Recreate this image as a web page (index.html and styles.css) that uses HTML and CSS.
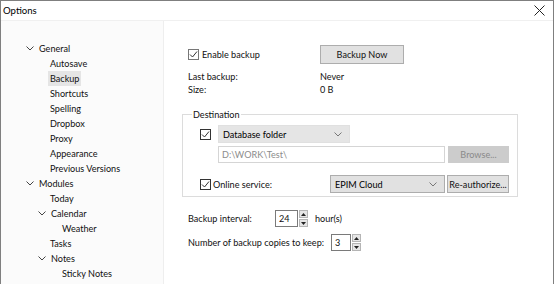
FILE: index.html
```html
<!DOCTYPE html>
<html>
<head>
<meta charset="utf-8">
<link rel="stylesheet" href="styles.css">
</head>
<body>
<div class="window">
  <div class="titlebar">
    <span class="title">Options</span>
    <svg class="close" width="11" height="11" viewBox="0 0 11 11"><path d="M0.5 0.5L10.5 10.5M10.5 0.5L0.5 10.5" stroke="#222" stroke-width="1" fill="none"/></svg>
  </div>
  <div class="main">
    <div class="tree">
      <div class="node l0"><svg class="chev" width="8" height="5" viewBox="0 0 8 5"><path d="M0.5 0.5L4 4L7.5 0.5" stroke="#444" fill="none"/></svg><span>General</span></div>
      <div class="node l1"><span>Autosave</span></div>
      <div class="node l1"><span class="sel">Backup</span></div>
      <div class="node l1"><span>Shortcuts</span></div>
      <div class="node l1"><span>Spelling</span></div>
      <div class="node l1"><span>Dropbox</span></div>
      <div class="node l1"><span>Proxy</span></div>
      <div class="node l1"><span>Appearance</span></div>
      <div class="node l1"><span>Previous Versions</span></div>
      <div class="node l0"><svg class="chev" width="8" height="5" viewBox="0 0 8 5"><path d="M0.5 0.5L4 4L7.5 0.5" stroke="#444" fill="none"/></svg><span>Modules</span></div>
      <div class="node l1"><span>Today</span></div>
      <div class="node l1c"><svg class="chev" width="8" height="5" viewBox="0 0 8 5"><path d="M0.5 0.5L4 4L7.5 0.5" stroke="#444" fill="none"/></svg><span>Calendar</span></div>
      <div class="node l2"><span>Weather</span></div>
      <div class="node l1"><span>Tasks</span></div>
      <div class="node l1c"><svg class="chev" width="8" height="5" viewBox="0 0 8 5"><path d="M0.5 0.5L4 4L7.5 0.5" stroke="#444" fill="none"/></svg><span>Notes</span></div>
      <div class="node l2"><span>Sticky Notes</span></div>
    </div>
    <div class="panel">
      <div class="row r-enable">
        <label class="check labelcol"><span class="box grey"><svg width="9" height="9" viewBox="0 0 9 9"><path d="M1 4.5L3.5 7L8 1.5" stroke="#333" stroke-width="1" fill="none"/></svg></span>Enable backup</label>
        <button class="btn now">Backup Now</button>
      </div>
      <div class="row info"><span class="labelcol">Last backup:</span><span>Never</span></div>
      <div class="row info"><span class="labelcol">Size:</span><span>0 B</span></div>
      <fieldset class="group">
        <legend>Destination</legend>
        <div class="grow g1">
          <span class="box"><svg width="9" height="9" viewBox="0 0 9 9"><path d="M1 4.5L3.5 7L8 1.5" stroke="#333" stroke-width="1" fill="none"/></svg></span>
          <div class="combo db"><span>Database folder</span><svg class="dd" width="8" height="5" viewBox="0 0 8 5"><path d="M0.5 0.5L4 4L7.5 0.5" stroke="#777" fill="none"/></svg></div>
        </div>
        <div class="grow g2">
          <div class="path">D:\WORK\Test\</div>
          <button class="btn browse">Browse...</button>
        </div>
        <div class="grow g3">
          <label class="check online"><span class="box"><svg width="9" height="9" viewBox="0 0 9 9"><path d="M1 4.5L3.5 7L8 1.5" stroke="#333" stroke-width="1" fill="none"/></svg></span>Online service:</label>
          <div class="combo cloud"><span>EPIM Cloud</span><svg class="dd" width="8" height="5" viewBox="0 0 8 5"><path d="M0.5 0.5L4 4L7.5 0.5" stroke="#777" fill="none"/></svg></div>
          <button class="btn reauth">Re-authorize...</button>
        </div>
      </fieldset>
      <div class="row spinrow s1">
        <span class="lab1">Backup interval:</span>
        <div class="spin"><span class="val w22">24</span><span class="arrows"><span class="arr"><svg width="5" height="3" viewBox="0 0 5 3"><path d="M0 3L2.5 0L5 3Z" fill="#222"/></svg></span><span class="arr"><svg width="5" height="3" viewBox="0 0 5 3"><path d="M0 0L2.5 3L5 0Z" fill="#222"/></svg></span></span></div>
        <span class="unit">hour(s)</span>
      </div>
      <div class="row spinrow s2">
        <span class="lab2">Number of backup copies to keep:</span>
        <div class="spin"><span class="val w19">3</span><span class="arrows"><span class="arr"><svg width="5" height="3" viewBox="0 0 5 3"><path d="M0 3L2.5 0L5 3Z" fill="#222"/></svg></span><span class="arr"><svg width="5" height="3" viewBox="0 0 5 3"><path d="M0 0L2.5 3L5 0Z" fill="#222"/></svg></span></span></div>
      </div>
    </div>
  </div>
</div>
</body>
</html>
```
FILE: styles.css
```css
* { box-sizing: border-box; }
html, body { margin: 0; padding: 0; background: #fff; }
body { font-family: "Lato", "Noto Sans", sans-serif; font-size: 9.1px; color: #111; white-space: nowrap; }
.window { width: 554px; height: 284px; border: 1px solid #7f7f7f; border-bottom: none; display: flex; flex-direction: column; overflow: hidden; }
.titlebar { height: 20px; flex: none; display: flex; align-items: center; justify-content: space-between; padding: 0 8px 0 2px; border-bottom: 1px solid #f0f0f0; }
.title { font-size: 9.6px; color: #000; }
.main { flex: 1; display: flex; }
.tree { width: 163px; flex: none; background: #fbfbfb; border-right: 1px solid #eeeeee; padding-top: 20px; }
.node { height: 15px; display: flex; align-items: center; }
.node span { padding: 0 2px; line-height: 15px; }
.l0 { padding-left: 25px; }
.l0 .chev { margin-right: 3px; }
.l1 { padding-left: 47px; }
.l1c { padding-left: 37px; }
.l1c .chev { margin-right: 3px; }
.l2 { padding-left: 59px; }
.sel { background: #e5e5e5; }
.panel { flex: 1; padding: 24px 0 0 18px; display: flex; flex-direction: column; }
.row { display: flex; align-items: center; margin-left: 6px; }
.labelcol { width: 132px; flex: none; }
.r-enable { height: 19px; }
.check { display: flex; align-items: center; }
.box { width: 11px; height: 11px; border: 1px solid #333; background: #fff; display: inline-flex; align-items: center; justify-content: center; margin-right: 3px; flex: none; }
.box.grey { border-color: #777; }
.btn { font: inherit; color: #111; background: #e1e1e1; border: 1px solid #adadad; padding: 0; margin: 0; display: flex; align-items: center; justify-content: center; }
.now { width: 84px; height: 19px; }
.info { height: 13px; }
.r-enable + .info { margin-top: 6px; }
.group { margin: 12px 0 0 0; width: 336px; height: 89px; border: 1px solid #dcdcdc; padding: 0 0 0 17px; }
.group legend { padding: 0 1px; margin-left: -8px; line-height: 13px; }
.grow { display: flex; align-items: center; }
.g1 { height: 18px; margin-top: 4px; }
.g1 .box { margin-right: 7px; }
.combo { display: flex; align-items: center; justify-content: space-between; height: 18px; background: #e5e5e5; border: 1px solid #e0e0e0; padding: 0 7px 0 4px; color: #000; }
.combo.db { width: 132px; }
.g2 { height: 17px; margin-top: 3px; padding-left: 18px; }
.path { width: 227px; height: 17px; border: 1px solid #d5d5d5; color: #8c8c8c; padding-left: 3px; display: flex; align-items: center; }
.browse { width: 61px; height: 17px; margin-left: 3px; background: #cccccc; border-color: #cccccc; color: #8a8a8a; }
.g3 { height: 18px; margin-top: 12px; }
.online { width: 130px; }
.online .box { margin-right: 2px; }
.cloud { width: 115px; background: #e1e1e1; border-color: #adadad; }
.reauth { width: 62px; height: 18px; margin-left: 2px; }
.spinrow { height: 17px; }
.s1 { margin-top: 13px; }
.s2 { margin-top: 7px; }
.lab1 { width: 87px; }
.lab2 { width: 143px; }
.spin { display: flex; align-items: stretch; height: 17px; }
.val { border: 1px solid #7a7a7a; height: 17px; padding-left: 3px; display: flex; align-items: center; }
.w22 { width: 23px; }
.w19 { width: 20px; }
.arrows { display: flex; flex-direction: column; margin-left: 1px; justify-content: center; gap: 1px; }
.arr { width: 9px; height: 8px; background: #e6e6e6; border: 1px solid #b5b5b5; display: flex; align-items: center; justify-content: center; }
.unit { margin-left: 7px; }
```
